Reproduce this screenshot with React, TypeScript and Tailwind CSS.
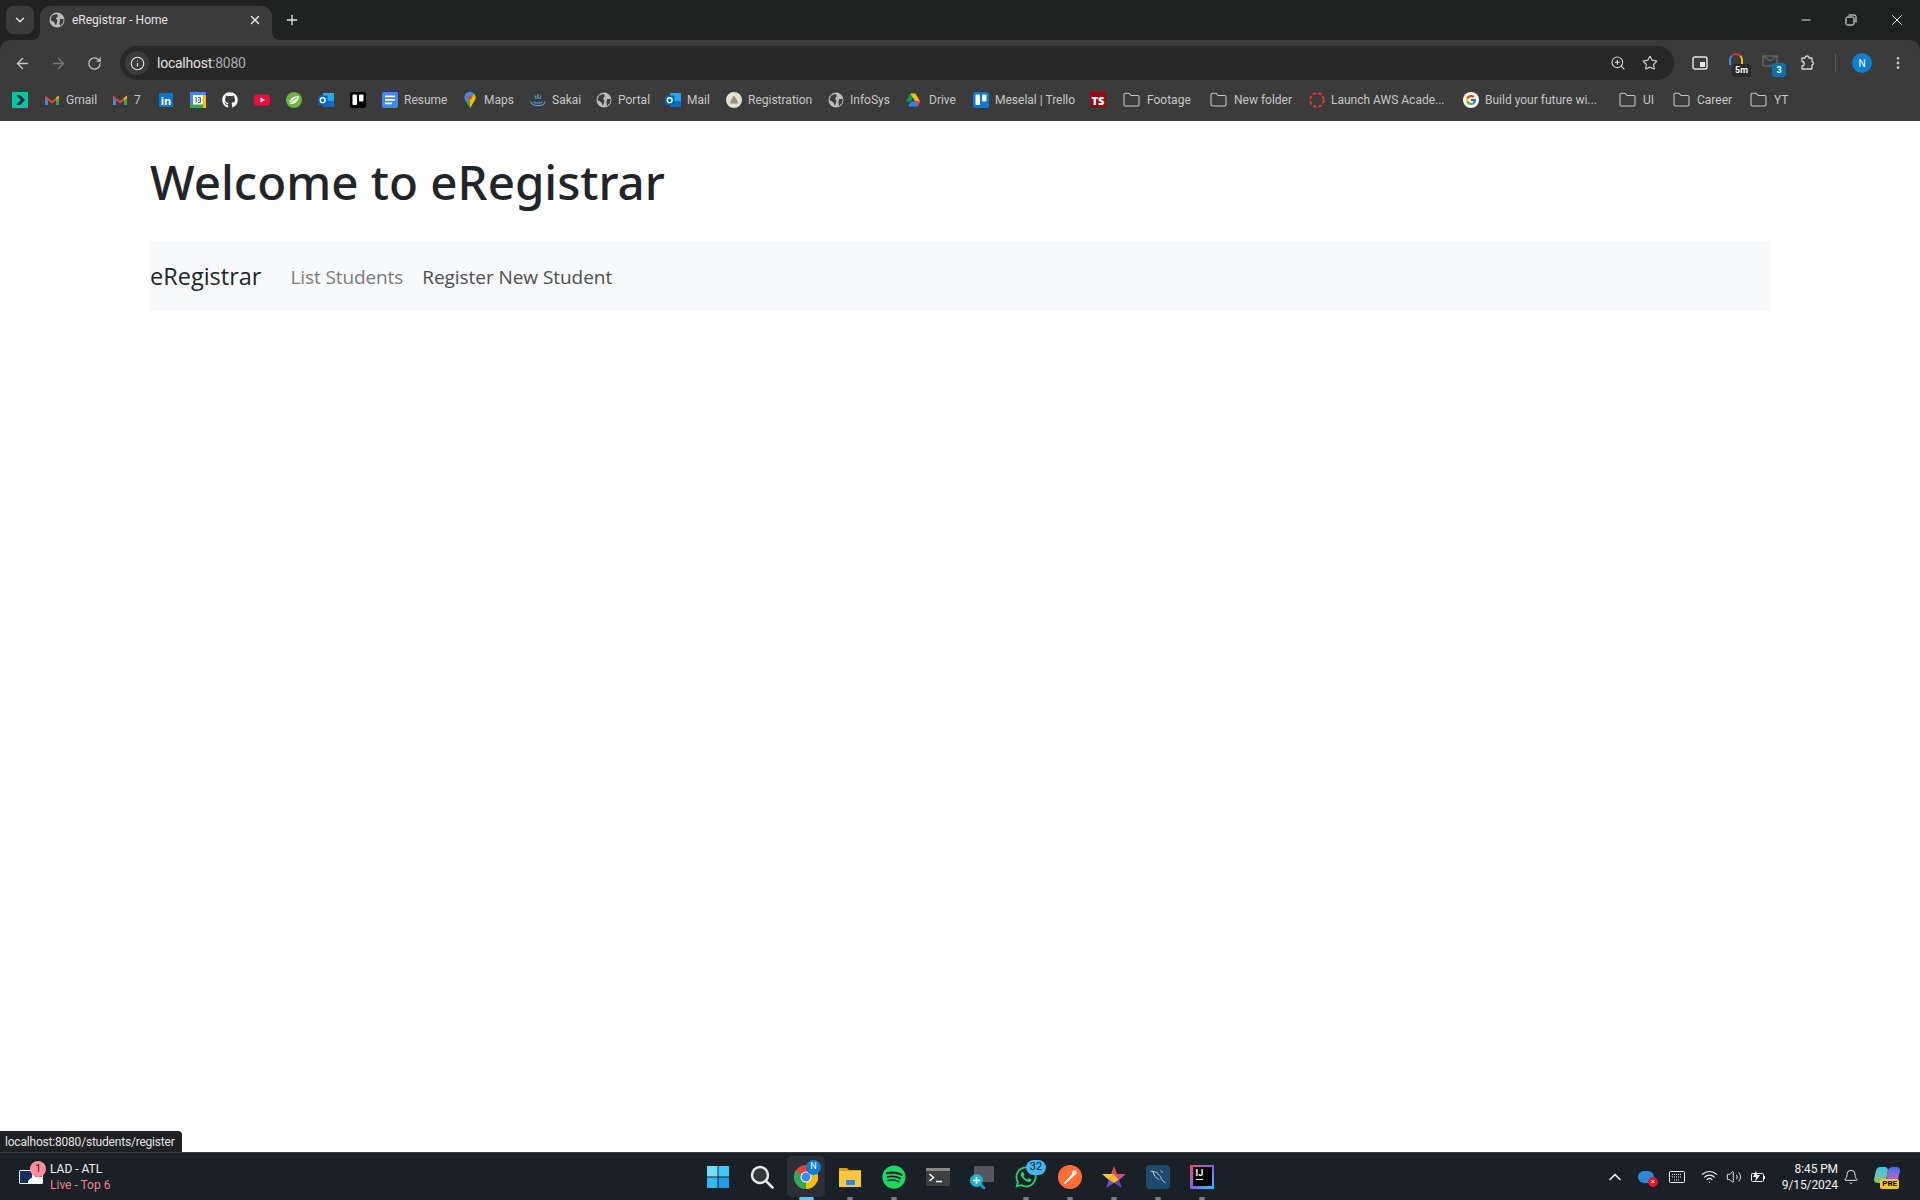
import type { ReactNode } from "react"
import {
  ArrowLeft,
  ArrowRight,
  Bell,
  ChevronDown,
  ChevronUp,
  EllipsisVertical,
  Folder,
  Info,
  Minus,
  Plus,
  RotateCw,
  Star,
  Volume2,
  Wifi,
  X,
  ZoomIn,
} from "lucide-react"
import { FaGithub, FaSpotify, FaWhatsapp } from "react-icons/fa"
import { FcGoogle } from "react-icons/fc"

const chromeFont = "font-['Roboto','Liberation_Sans',sans-serif]"

function Globe() {
  return (
    <svg viewBox="0 0 16 16" className="h-4 w-4">
      <circle cx="8" cy="8" r="7.500" fill="#b9bcbf" />
      <path d="M3 3.500 7.500 2 9 4 7 6.500 8.500 9 7 13.500 5 10 1.500 8ZM11 7h3.600l-.6 4-3 3-.5-3Z" fill="#3b3b3b" />
    </svg>
  )
}

function Gmail() {
  return (
    <svg viewBox="0 0 16 16" className="h-4 w-4">
      <path d="M1 13V4l3 2v7Z" fill="#4285f4" />
      <path d="M15 13V4l-3 2v7Z" fill="#34a853" />
      <path d="M1 3.500 8 9l7-5.500V6L8 11.500 1 6Z" fill="#ea4335" />
      <path d="M12 6l3-2.500V6l-3 2Z" fill="#fbbc04" />
    </svg>
  )
}

function Outlook() {
  return (
    <svg viewBox="0 0 16 16" className="h-4 w-4">
      <rect x="5" y="1" width="11" height="14" fill="#28a8ea" />
      <path d="M5 9h11v6H5Z" fill="#0f6cbd" />
      <rect x="0" y="3.500" width="9.500" height="9.500" rx="1" fill="#0364b8" />
      <circle cx="4.700" cy="8.200" r="2.400" fill="none" stroke="#fff" strokeWidth="1.400" />
    </svg>
  )
}

function Trello({ bg, bar }: { bg: string; bar: string }) {
  return (
    <svg viewBox="0 0 16 16" className="h-4 w-4">
      <rect width="16" height="16" rx="2.500" fill={bg} />
      <rect x="2.500" y="2.500" width="4.500" height="10.500" rx="1" fill={bar} />
      <rect x="9" y="2.500" width="4.500" height="7" rx="1" fill={bar} />
    </svg>
  )
}

const folderIcon = <Folder className="h-[18px] w-[19px] text-[#c7c7c7]" strokeWidth={1.4} />

const bookmarks: { icon: ReactNode; label?: string; w?: string }[] = [
  {
    icon: (
      <svg viewBox="0 0 16 16" className="h-4 w-4">
        <rect width="16" height="16" fill="#00c9a0" />
        <path d="M4 3h4l5 5-5 5H4l5-5Z" fill="#14213d" />
      </svg>
    ),
  },
  { icon: <Gmail />, label: "Gmail", w: "w-[30px]" },
  { icon: <Gmail />, label: "7", w: "w-[8px]" },
  {
    icon: (
      <span className="flex h-4 w-4 items-center justify-center">
        <span className="flex h-[14px] w-[14px] items-center justify-center rounded-[1px] bg-[#0a78c4] text-[11px] font-bold leading-none text-white">in</span>
      </span>
    ),
  },
  {
    icon: (
      <svg viewBox="0 0 16 16" className="h-4 w-4">
        <rect width="16" height="16" fill="#4285f4" />
        <rect x="12" y="3" width="4" height="13" fill="#fbbc04" />
        <rect y="12" width="13" height="4" fill="#34a853" />
        <rect x="3" y="3" width="9.500" height="9.500" fill="#fff" />
        <path d="M5 5.500h1.200v5M8 5.500h2.500v5H8M8 8h2.500" fill="none" stroke="#1967d2" />
      </svg>
    ),
  },
  { icon: <FaGithub className="h-4 w-4 text-white" /> },
  {
    icon: (
      <svg viewBox="0 0 16 16" className="h-4 w-4">
        <rect y="2.500" width="16" height="11" rx="3" fill="#f40b3d" />
        <path d="M6.500 5.500v5L11 8Z" fill="#fff" />
      </svg>
    ),
  },
  {
    icon: (
      <svg viewBox="0 0 16 16" className="h-4 w-4">
        <circle cx="8" cy="8" r="8" fill="#6db33f" />
        <path d="M3.500 12C3 7 7.500 3.500 13 4c-.3 5-3.500 8.500-9.500 8Z" fill="#e9f5dd" />
        <path d="M4 11.500C6 8.500 8 7 11 5.500" stroke="#6db33f" fill="none" />
      </svg>
    ),
  },
  { icon: <Outlook /> },
  { icon: <Trello bg="#000" bar="#fff" /> },
  {
    icon: (
      <svg viewBox="0 0 16 16" className="h-4 w-4">
        <rect width="16" height="16" rx="2" fill="#4285f4" />
        <path d="M3 3.500h10v1.700H3ZM3 7h10v1.700H3ZM3 10.500h7v1.700H3Z" fill="#fff" />
      </svg>
    ),
    label: "Resume",
    w: "w-[42px]",
  },
  {
    icon: (
      <svg viewBox="0 0 16 16" className="h-4 w-4">
        <path d="M8 0a5.500 5.500 0 0 0-5.500 5.500c0 1.300.5 2.400 1.200 3.400L8 16l4.300-7.100c.7-1 1.200-2.100 1.200-3.400A5.500 5.500 0 0 0 8 0Z" fill="#34a853" />
        <path d="M8 0a5.500 5.500 0 0 1 4.300 2L3.700 8.900a5.500 5.500 0 0 1-1.200-3.400A5.500 5.500 0 0 1 8 0Z" fill="#4285f4" />
        <path d="M12.300 2a5.500 5.500 0 0 1 1.200 3.500c0 1.300-.5 2.400-1.200 3.400L8 16V8Z" fill="#fbbc04" />
        <circle cx="8" cy="5.500" r="2" fill="#ea4335" />
      </svg>
    ),
    label: "Maps",
    w: "w-[30px]",
  },
  {
    icon: (
      <svg viewBox="0 0 16 16" className="h-4 w-4" fill="none" stroke="#4d94d1" strokeWidth="1.300">
        <path d="M1 9.500c0 5.500 14 5.500 14 0M3.500 10c2 1.500 7 1.500 9 0" />
        <path d="M8 2v5M5 3.500l1.300 3.500M11 3.500 9.700 7" />
      </svg>
    ),
    label: "Sakai",
    w: "w-[28px]",
  },
  { icon: <Globe />, label: "Portal", w: "w-[31px]" },
  { icon: <Outlook />, label: "Mail", w: "w-[23px]" },
  {
    icon: (
      <svg viewBox="0 0 16 16" className="h-4 w-4">
        <circle cx="8" cy="8" r="8" fill="#e4e1d3" />
        <path d="M8 3.500 11 8l1 3.500H4L5 8Z" fill="#97927f" />
      </svg>
    ),
    label: "Registration",
    w: "w-[64px]",
  },
  { icon: <Globe />, label: "InfoSys", w: "w-[39px]" },
  {
    icon: (
      <svg viewBox="0 0 16 16" className="h-4 w-4">
        <path d="M5.500 1.500h5L5.800 9.500H.8Z" fill="#0f9d58" />
        <path d="M10.500 1.500 15.200 9.500h-5L5.500 1.500Z" fill="#ffba00" />
        <path d="M5.800 9.500h9.400l-2.500 5H3.300Z" fill="#2684fc" />
        <path d="M10.200 9.500h5l-2.500 5Z" fill="#ea4335" />
      </svg>
    ),
    label: "Drive",
    w: "w-[30px] pl-[2px]",
  },
  { icon: <Trello bg="#0c78d0" bar="#fff" />, label: "Meselal | Trello", w: "w-[79px]" },
  {
    icon: (
      <span className="flex h-4 w-4 items-center justify-center bg-[#8f0e14] text-[11px] font-black leading-none text-white">TS</span>
    ),
  },
  { icon: folderIcon, label: "Footage", w: "w-[46px]" },
  { icon: folderIcon, label: "New folder", w: "w-[59px]" },
  {
    icon: (
      <svg viewBox="0 0 16 16" className="h-4 w-4" fill="none" stroke="#ed3237" strokeWidth="2" strokeDasharray="3.500 2">
        <circle cx="8" cy="8" r="6.800" />
      </svg>
    ),
    label: "Launch AWS Acade...",
    w: "w-[116px]",
  },
  {
    icon: (
      <span className="flex h-4 w-4 items-center justify-center rounded-full bg-white">
        <FcGoogle className="h-3 w-3" />
      </span>
    ),
    label: "Build your future wi...",
    w: "w-[117px]",
  },
  { icon: folderIcon, label: "UI", w: "w-[13px]" },
  { icon: folderIcon, label: "Career", w: "w-[36px]" },
  { icon: folderIcon, label: "YT", w: "w-[13px]" },
]

function TabStrip() {
  return (
    <div className="flex h-10 items-end bg-[#202222]">
      <div className="mb-[6px] ml-[6px] flex h-7 w-7 items-center justify-center rounded-lg bg-[#3b3b3b]">
        <ChevronDown className="h-3.5 w-3.5 text-[#e3e3e3]" strokeWidth={2.5} />
      </div>
      <div className="relative ml-[6px] flex h-[34px] w-[232px] items-center rounded-t-[10px] bg-[#3b3b3b] pb-1.5 pl-[9px] pr-[10px]">
        <svg viewBox="0 0 8 8" className="absolute -left-2 bottom-0 h-2 w-2">
          <path d="M8 0v8H0a8 8 0 0 0 8-8Z" fill="#3b3b3b" />
        </svg>
        <svg viewBox="0 0 8 8" className="absolute -right-2 bottom-0 h-2 w-2">
          <path d="M0 0v8h8a8 8 0 0 1-8-8Z" fill="#3b3b3b" />
        </svg>
        <Globe />
        <span className={`ml-[7px] flex-1 text-[12px] text-[#e3e3e3] ${chromeFont}`}>eRegistrar - Home</span>
        <X className="h-3.5 w-3.5 text-[#e3e3e3]" strokeWidth={2.5} />
      </div>
      <div className="mb-[6px] ml-[12px] flex h-7 w-4 items-center justify-center">
        <Plus className="h-4 w-4 text-[#e3e3e3]" strokeWidth={2} />
      </div>
      <div className="mb-[6px] ml-auto flex h-7 items-center pr-[14px] text-white">
        <Minus className="h-[14px] w-[14px]" strokeWidth={1.5} />
        <span className="ml-[30px] flex h-4 w-4 items-center justify-center">
          <svg viewBox="0 0 12 12" className="h-3 w-3" fill="none" stroke="currentColor">
            <rect x="1" y="3" width="8" height="8" rx="1.500" />
            <path d="M3.500 1h6a1.500 1.500 0 0 1 1.500 1.500v6" />
          </svg>
        </span>
        <X className="ml-[29px] h-[18px] w-[18px]" strokeWidth={1.2} />
      </div>
    </div>
  )
}

function Toolbar() {
  return (
    <div className="flex h-10 items-end rounded-t-[10px] bg-[#3b3b3b] pl-1 pr-1 text-[#c7c7c7]">
      <div className="flex h-[34px] w-9 items-center justify-center">
        <ArrowLeft className="h-[17px] w-[17px]" strokeWidth={2} />
      </div>
      <div className="flex h-[34px] w-9 items-center justify-center text-[#777]">
        <ArrowRight className="h-[17px] w-[17px]" strokeWidth={2} />
      </div>
      <div className="flex h-[34px] w-9 items-center justify-center">
        <RotateCw className="h-[15px] w-[15px]" strokeWidth={2} />
      </div>
      <div className="ml-2 flex h-[34px] flex-1 items-center rounded-full bg-[#282828] pl-[5px] pr-4">
        <div className="flex h-6 w-6 items-center justify-center rounded-full bg-[#3b3b3b]">
          <Info className="h-[15px] w-[15px] text-[#e3e3e3]" strokeWidth={1.8} />
        </div>
        <span className={`ml-2 text-[14px] tracking-[-0.25px] text-[#e3e3e3] ${chromeFont}`}>
          localhost<span className="text-[#a8abad]">:8080</span>
        </span>
        <ZoomIn className="ml-auto h-4 w-4" strokeWidth={1.8} />
        <Star className="ml-4 h-4 w-4" strokeWidth={1.8} />
      </div>
      <div className="ml-2 flex h-[34px] w-9 items-center justify-center">
        <svg viewBox="0 0 16 14" className="h-[14px] w-4">
          <rect x="1" y="1" width="14" height="12" rx="2" fill="none" stroke="#e8e8e8" strokeWidth="1.400" />
          <rect x="8" y="6" width="5" height="5" fill="#e8e8e8" />
        </svg>
      </div>
      <div className="relative flex h-[34px] w-9 items-center justify-center">
        <span className="mb-2 h-3 w-[14px] rounded-t-full border-2 border-b-0 border-t-[#d93025] border-r-[#fbbc04] border-l-[#4285f4]"></span>
        <span className={`absolute bottom-[3px] right-[3px] rounded-[3px] bg-[#2a2a2a] px-[3px] text-[9px] font-bold leading-[13px] text-white ${chromeFont}`}>5m</span>
      </div>
      <div className="relative flex h-[34px] w-9 items-center justify-center">
        <svg viewBox="0 0 16 12" className="mb-1 mr-1 h-3 w-4" fill="none" stroke="#666" strokeWidth="1.400">
          <rect x="1" y="1" width="14" height="10" />
          <path d="m1 1 7 5 7-5" />
        </svg>
        <span className={`absolute bottom-[3px] right-[4px] h-[14px] w-[14px] rounded-[3px] bg-[#0b6fa8] text-center text-[9px] font-bold leading-[14px] text-white ${chromeFont}`}>3</span>
      </div>
      <div className="flex h-[34px] w-9 items-center justify-center">
        <svg viewBox="0 0 16 16" className="h-[16px] w-[16px]" fill="none" stroke="#d5d5d5" strokeWidth="1.300" strokeLinejoin="round">
          <path d="M2 3h3a2 2 0 0 1 4 0h3v3.500a1.800 1.800 0 0 1 0 3.500V14H2v-3a2 2 0 0 0 0-4.500Z" />
        </svg>
      </div>
      <div className="ml-[9px] mt-[6px] h-[18px] w-px self-center bg-[#5f5f5f]"></div>
      <div className="ml-2 flex h-[34px] w-9 items-center justify-center">
        <span className={`flex h-5 w-5 items-center justify-center rounded-full bg-[#0b7fd4] text-[10px] text-white ${chromeFont}`}>N</span>
      </div>
      <div className="flex h-[34px] w-9 items-center justify-center">
        <EllipsisVertical className="h-4 w-4" strokeWidth={2.2} />
      </div>
    </div>
  )
}

function BookmarksBar() {
  return (
    <div className="flex h-[41px] items-center bg-[#3b3b3b] pb-px pl-1">
      {bookmarks.map((b, i) => (
        <div key={i} className="flex items-center gap-1.5 px-2">
          {b.icon}
          {b.label && (
            <span className={`whitespace-nowrap text-[12px] text-[#c7c7c7] ${b.w} ${chromeFont}`}>{b.label}</span>
          )}
        </div>
      ))}
    </div>
  )
}

function PageContent() {
  return (
    <main className="relative flex-1 bg-white font-['Open_Sans','Noto_Sans',sans-serif]">
      <div className="mx-[150px]">
        <h1 className="pb-[29px] pt-[31px] font-['Noto_Sans','Open_Sans',sans-serif] text-[47.500px] font-medium leading-[60px] text-[#212529]">
          Welcome to eRegistrar
        </h1>
        <nav className="flex h-[70px] items-center bg-[#f8f9fa] pt-[2px]">
          <span className="text-[23.500px] text-[#212529]">eRegistrar</span>
          <span className="ml-[29px] text-[19px] tracking-[-0.1px] text-[#7a7b7c]">List Students</span>
          <span className="ml-[19px] text-[19px] tracking-[-0.05px] text-[#4d4e50]">Register New Student</span>
        </nav>
      </div>
      <div className={`absolute bottom-0 left-0 flex h-[21px] w-[182px] items-center rounded-tr-[4px] bg-[#202124] pl-[5px] text-[12px] tracking-[-0.2px] text-[#e3e3e3] ${chromeFont}`}>
        localhost:8080/students/register
      </div>
    </main>
  )
}

const dot = "h-[3px] w-[6px] rounded-full bg-[#7f8285]"

function TaskIcon({ children, indicator }: { children: ReactNode; indicator?: boolean }) {
  return (
    <div className="relative flex h-12 w-[44px] items-center justify-center">
      {children}
      {indicator && <span className={`absolute bottom-[1px] ${dot}`}></span>}
    </div>
  )
}

function Taskbar() {
  return (
    <footer className={`flex h-12 items-center border-t border-[#3a3d40] bg-[#1a2027] text-white ${chromeFont}`}>
      <div className="flex w-[696px] items-center pl-[19px]">
        <div className="relative mr-[7px] h-3.5 w-6">
          <svg viewBox="0 0 24 14" className="h-3.5 w-6">
            <rect width="24" height="14" rx="1.500" fill="#f2f2f2" />
            <rect x="1" y="1" width="12" height="12" fill="#12305f" />
            <rect x="16" y="1" width="7" height="6" fill="#d3213f" />
            <path d="M9 13c0-3 2-5 5-5l1-3 2 3c3 1 4 3 5 5Z" fill="#fff" />
          </svg>
          <span className="absolute -right-[3px] -top-[9px] flex h-4 w-4 items-center justify-center rounded-full bg-[#ff8f9c] text-[11px] leading-none text-[#222]">1</span>
        </div>
        <div className="text-[12px] leading-4">
          <div className="text-[#f3f3f3]">LAD - ATL</div>
          <div className="text-[#f0808f]">Live - Top 6</div>
        </div>
      </div>
      <div className="flex items-center">
        <TaskIcon>
          <svg viewBox="0 0 24 24" className="h-6 w-6">
            <path d="M1 1h10.500v10.500H1Z" fill="#6ce0fb" />
            <path d="M12.500 1H23v10.500H12.500Z" fill="#3ecbf7" />
            <path d="M1 12.500h10.500V23H1Z" fill="#30b9f2" />
            <path d="M12.500 12.500H23V23H12.500Z" fill="#1c9ee8" />
          </svg>
        </TaskIcon>
        <TaskIcon>
          <svg viewBox="0 0 24 24" className="h-6 w-6" fill="none" stroke="#e6e6e6" strokeWidth="2.500">
            <circle cx="10" cy="10" r="8" fill="#33383d" />
            <path d="m16 16 6.500 6.500" strokeLinecap="round" />
          </svg>
        </TaskIcon>
        <div className="relative flex h-12 w-[44px] items-center justify-center">
          <span className="absolute inset-x-[3px] top-[3px] h-[41px] rounded-[5px] bg-[#2a3036]"></span>
          <svg viewBox="0 0 24 24" className="relative h-6 w-6">
            <circle cx="12" cy="12" r="12" fill="#ea4335" />
            <path d="M12 12 22.400 6A12 12 0 0 1 12 24Z" fill="#fbbc04" />
            <path d="M12 12 12 24A12 12 0 0 1 1.600 6Z" fill="#34a853" />
            <circle cx="12" cy="12" r="5.500" fill="#fff" />
            <circle cx="12" cy="12" r="4.500" fill="#4285f4" />
          </svg>
          <span className="absolute right-[7px] top-[7px] flex h-[15px] w-[15px] items-center justify-center rounded-full bg-[#0b7fd4] text-[9px]">N</span>
          <span className="absolute bottom-[1px] h-[3px] w-[15px] rounded-full bg-[#5fc4f5]"></span>
        </div>
        <TaskIcon indicator>
          <svg viewBox="0 0 24 24" className="h-6 w-6">
            <path d="M1 3h8l2 2h12v4H1Z" fill="#d79f1a" />
            <rect x="1" y="6" width="22" height="16" fill="#fdc83c" />
            <rect x="8" y="15" width="9" height="5" rx="1" fill="#2b8ad6" />
          </svg>
        </TaskIcon>
        <TaskIcon indicator>
          <FaSpotify className="h-6 w-6 text-[#1ed760]" />
        </TaskIcon>
        <TaskIcon>
          <svg viewBox="0 0 24 24" className="h-6 w-6">
            <rect y="3" width="24" height="18" rx="1.500" fill="#3d3f41" />
            <rect y="3" width="24" height="3" fill="#888" />
            <path d="m3.500 9 4 3.500-4 3.500" fill="none" stroke="#fff" strokeWidth="1.500" />
            <path d="M10 16.500h6" stroke="#fff" strokeWidth="1.500" />
          </svg>
        </TaskIcon>
        <TaskIcon>
          <svg viewBox="0 0 24 24" className="h-6 w-6">
            <rect x="4" y="1" width="20" height="16" rx="1.500" fill="#54585c" />
            <path d="m9 18 5 5" stroke="#1fa7c9" strokeWidth="2.500" strokeLinecap="round" />
            <circle cx="6.500" cy="15.500" r="6.500" fill="#1fb3cc" />
            <path d="M6.500 12v7M3 15.500h7" stroke="#fff" strokeWidth="1.600" />
          </svg>
        </TaskIcon>
        <TaskIcon indicator>
          <FaWhatsapp className="h-6 w-6 text-[#25d366]" />
          <span className="absolute left-[22px] top-[7px] flex h-[15px] w-5 items-center justify-center rounded-full bg-[#47b4f0] text-[11px] text-[#10202c]">32</span>
        </TaskIcon>
        <TaskIcon indicator>
          <svg viewBox="0 0 24 24" className="h-6 w-6">
            <circle cx="12" cy="12" r="12" fill="#ff6c37" />
            <path d="m6 18 9-10 2 2-10 9Z" fill="#fff" />
            <circle cx="16.500" cy="7.500" r="2.200" fill="#fff" />
          </svg>
        </TaskIcon>
        <TaskIcon indicator>
          <svg viewBox="0 0 24 24" className="h-6 w-6">
            <path d="M12 1 15 9H9Z" fill="#e5484d" />
            <path d="M15 9h9l-7 6-5-6Z" fill="#d9478f" />
            <path d="m17 15 3 8-8-5Z" fill="#5b3fc4" />
            <path d="m7 15-3 8 8-5Z" fill="#7a4ad1" />
            <path d="M0 9h9l3 0-5 6Z" fill="#fcc934" />
            <path d="m7 15 5-6 5 6-5 3Z" fill="#f3b72f" />
          </svg>
        </TaskIcon>
        <TaskIcon indicator>
          <div className="flex h-6 w-6 items-center justify-center rounded-[4px] bg-[#1d4a6d]">
            <svg viewBox="0 0 24 24" className="h-5 w-5" fill="none" stroke="#b8cbd8" strokeWidth="1.200">
              <path d="M3 5c6 0 11 3 13 9 1 2 3 4 5 5M6 5c1 5 3 8 7 10M15 4l3 3" />
            </svg>
          </div>
        </TaskIcon>
        <TaskIcon indicator>
          <div className="flex h-6 w-6 items-center justify-center bg-gradient-to-br from-[#fe315d] via-[#7a5cf0] to-[#07c3f2]">
            <div className="flex h-[19px] w-[19px] flex-col bg-black pl-[3px] pt-[1px] text-[9px] font-bold leading-[10px] text-white">
              IJ
              <span className="mt-[1px] h-[1px] w-[7px] bg-white"></span>
            </div>
          </div>
        </TaskIcon>
      </div>
      <div className="flex flex-1 items-center justify-end pr-[21px]">
        <ChevronUp className="mr-[13px] h-5 w-5 text-[#f0f0f0]" strokeWidth={2} />
        <div className="relative mr-[15px] h-3 w-4 rounded-full bg-[#2b8ad6]">
          <span className="absolute -bottom-[4px] -right-[4px] flex h-[10px] w-[10px] items-center justify-center rounded-full bg-[#e81123] text-[8px] leading-none text-white">×</span>
        </div>
        <svg viewBox="0 0 16 12" className="mr-[16px] h-3 w-4" fill="none" stroke="#f0f0f0">
          <rect x=".5" y=".5" width="15" height="11" rx="1" />
          <path d="M3 3.500h10M3 6h10M5 9h6" strokeDasharray="1 1" />
        </svg>
        <Wifi className="mr-[8px] h-[17px] w-[17px] text-[#f0f0f0]" strokeWidth={1.6} />
        <Volume2 className="mr-[8px] h-[16px] w-[16px] text-[#f0f0f0]" strokeWidth={1.4} />
        <svg viewBox="0 0 16 12" className="h-3 w-4" fill="none" stroke="#f0f0f0">
          <rect x="1.500" y="2.500" width="12" height="8" rx="1" />
          <path d="M14.500 5v3" />
          <path d="M6 0 3 6h3l-1 5 5-7H7Z" fill="#f0f0f0" stroke="none" />
        </svg>
        <div className="ml-[16px] text-right text-[12px] leading-4 tracking-[-0.1px] text-[#f3f3f3]">
          <div>8:45 PM</div>
          <div>9/15/2024</div>
        </div>
        <Bell className="ml-[5px] h-4 w-4 text-[#f0f0f0]" strokeWidth={1.4} />
        <div className="relative ml-[16px] h-6 w-6">
          <span className="absolute left-0 top-[2px] h-4 w-3 -skew-x-12 rounded-[4px] bg-gradient-to-b from-[#35c1f1] to-[#8dc63f]"></span>
          <span className="absolute right-0 top-[2px] h-4 w-3 -skew-x-12 rounded-[4px] bg-gradient-to-b from-[#2870ea] to-[#d84fb5]"></span>
          <span className="absolute bottom-0 right-0 rounded-[2px] bg-[#f7c325] px-[2px] text-[8px] font-bold leading-[10px] text-black">PRE</span>
        </div>
      </div>
    </footer>
  )
}

export default function App() {
  return (
    <div className="flex h-[1200px] w-[1920px] flex-col overflow-hidden bg-[#202222]">
      <TabStrip />
      <Toolbar />
      <BookmarksBar />
      <PageContent />
      <Taskbar />
    </div>
  )
}
